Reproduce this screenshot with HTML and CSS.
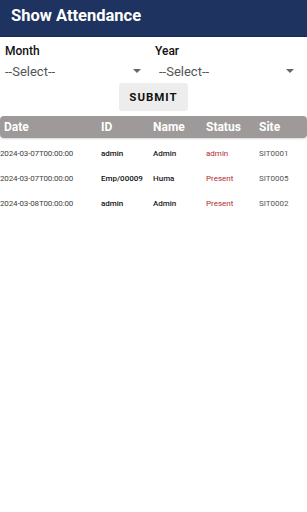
FILE: index.html
```html
<!DOCTYPE html>
<html>
<head>
<meta charset="utf-8">
<link rel="stylesheet" href="styles.css">
</head>
<body>
<header class="appbar"><h1>Show Attendance</h1></header>
<div class="filters">
  <div class="field">
    <div class="label">Month</div>
    <div class="select"><span>--Select--</span><span class="arrow"></span></div>
  </div>
  <div class="field">
    <div class="label">Year</div>
    <div class="select"><span>--Select--</span><span class="arrow"></span></div>
  </div>
</div>
<div class="actions"><button class="submit">SUBMIT</button></div>
<div class="thead">
  <span class="c-date">Date</span>
  <span class="c-id">ID</span>
  <span class="c-name">Name</span>
  <span class="c-status">Status</span>
  <span class="c-site">Site</span>
</div>
<div class="rows">
  <div class="row">
    <span class="c-date">2024-03-07T00:00:00</span>
    <span class="c-id">admin</span>
    <span class="c-name">Admin</span>
    <span class="c-status">admin</span>
    <span class="c-site">SIT0001</span>
  </div>
  <div class="row">
    <span class="c-date">2024-03-07T00:00:00</span>
    <span class="c-id">Emp/00009</span>
    <span class="c-name">Huma</span>
    <span class="c-status">Present</span>
    <span class="c-site">SIT0005</span>
  </div>
  <div class="row">
    <span class="c-date">2024-03-08T00:00:00</span>
    <span class="c-id">admin</span>
    <span class="c-name">Admin</span>
    <span class="c-status">Present</span>
    <span class="c-site">SIT0002</span>
  </div>
</div>
</body>
</html>
```
FILE: styles.css
```css
* { box-sizing: border-box; }
body {
  margin: 0;
  width: 307px;
  height: 512px;
  background: #fff;
  font-family: Roboto, "Noto Sans", sans-serif;
  overflow: hidden;
}
.appbar {
  height: 37px;
  background: #1f3360;
  padding: 6px 0 0 11px;
  border-bottom: 1px solid #182a52;
}
.appbar h1 {
  margin: 0;
  color: #fff;
  font-size: 16.5px;
  font-weight: 700;
  line-height: 20px;
}
.filters {
  display: grid;
  grid-template-columns: 150px 1fr;
  padding: 6px 0 0 5px;
}
.label {
  font-size: 12px;
  font-weight: 500;
  color: #111;
  line-height: 16px;
}
.select {
  display: flex;
  align-items: center;
  justify-content: space-between;
  height: 24px;
  font-size: 13px;
  color: #555;
}
.select .arrow {
  width: 0;
  height: 0;
  border-left: 4px solid transparent;
  border-right: 4px solid transparent;
  border-top: 4px solid #666;
}
.field:first-child .select { padding-right: 14px; }
.field:last-child .select { padding-left: 4px; padding-right: 13px; }
.actions {
  display: flex;
  justify-content: center;
}
.submit {
  width: 69px;
  height: 28px;
  border: none;
  border-radius: 3px;
  background: #eeeded;
  font-family: Roboto, sans-serif;
  font-size: 11.5px;
  font-weight: 700;
  letter-spacing: 1px;
  color: #111;
  padding: 0;
}
.thead, .row {
  display: grid;
  align-items: center;
}
.thead {
  grid-template-columns: 97px 52px 53px 53px 1fr;
  margin-top: 5px;
  height: 22px;
  background: #9d9a99;
  border-radius: 4px;
  color: #fff;
  font-size: 12px;
  font-weight: 700;
  padding-left: 4px;
  box-shadow: 0 1px 2px rgba(0,0,0,0.15);
}
.rows { padding-top: 3px; }
.row {
  height: 25px;
  font-size: 8px;
  color: #444;
  grid-template-columns: 101px 52px 53px 53px 1fr;
}
.row .c-id { color: #111; font-weight: 500; }
.row .c-name { color: #222; font-weight: 500; }
.row .c-status { color: #b32a2a; }
.row .c-site { color: #555; }
.row .c-date { letter-spacing: -0.15px; }
```
